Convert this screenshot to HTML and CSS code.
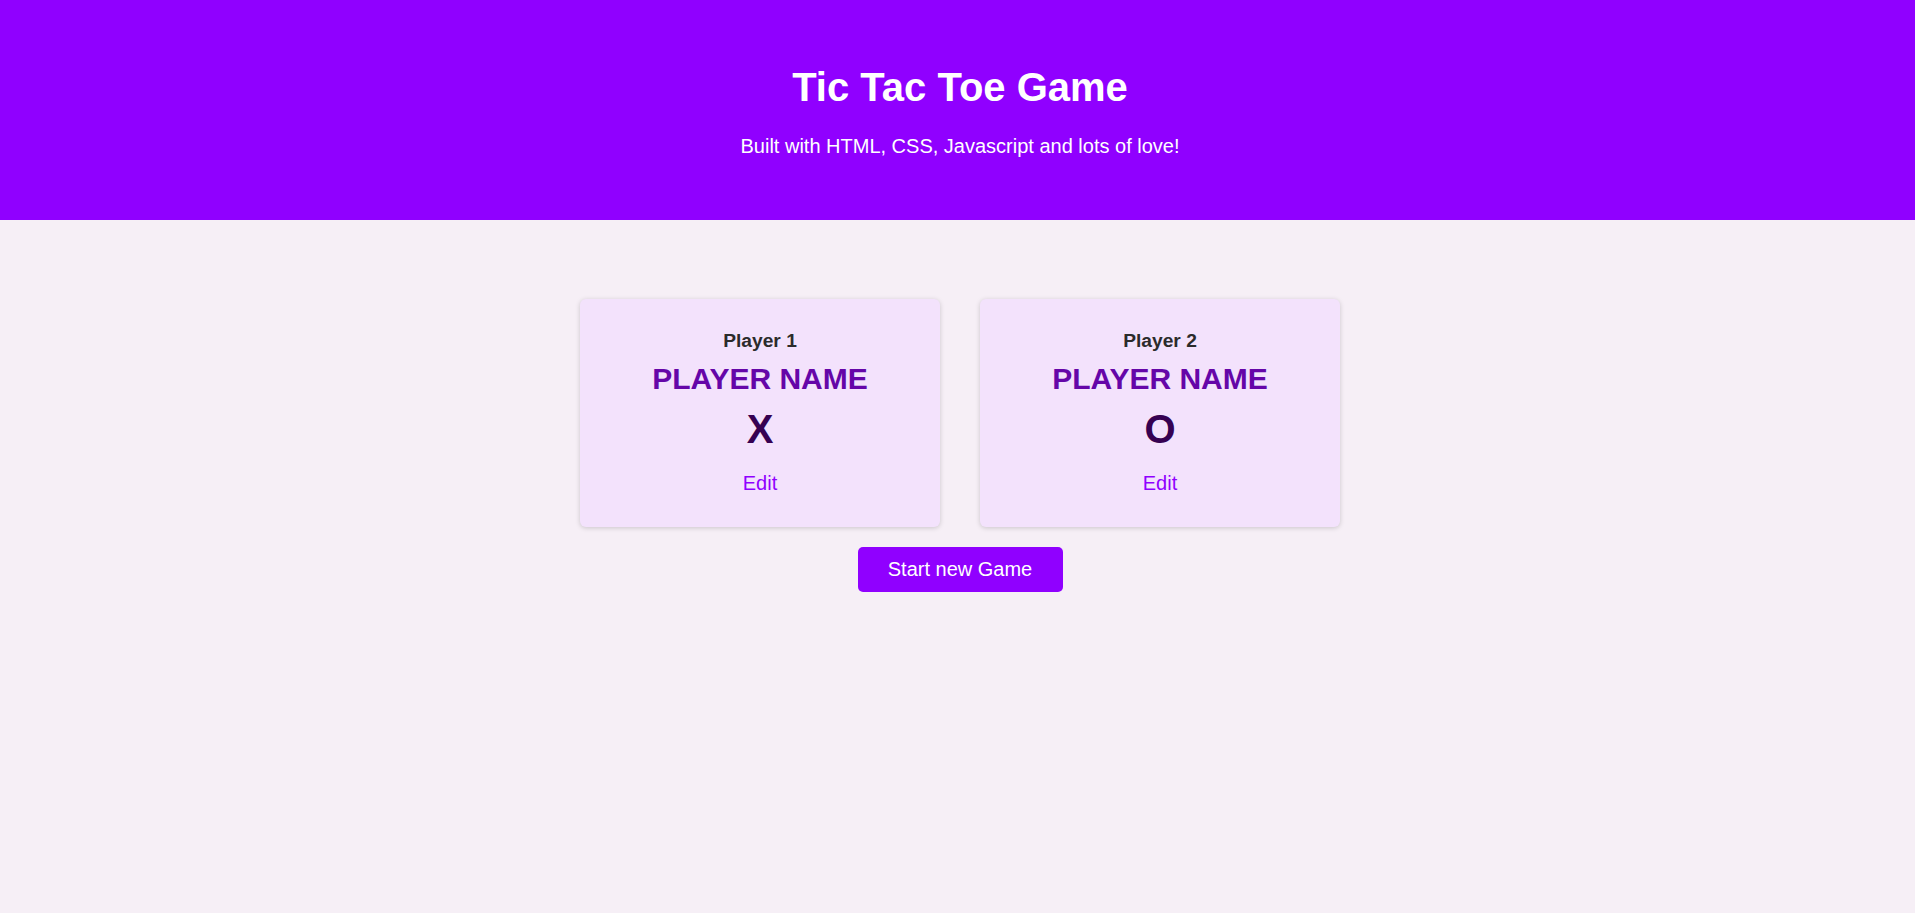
FILE: index.html
```html
<!DOCTYPE html>
<html lang="en">
<head>
<meta charset="utf-8">
<title>Tic Tac Toe</title>
<link rel="stylesheet" href="styles.css">
</head>
<body>
<header class="main-header">
  <h1 class="title">Tic Tac Toe Game</h1>
  <p class="subtitle">Built with HTML, CSS, Javascript and lots of love!</p>
</header>
<main class="content">
  <ol class="players">
    <li class="player-card">
      <h2 class="player-label">Player 1</h2>
      <h3 class="player-name">PLAYER NAME</h3>
      <p class="player-symbol">X</p>
      <button class="edit-btn">Edit</button>
    </li>
    <li class="player-card">
      <h2 class="player-label">Player 2</h2>
      <h3 class="player-name">PLAYER NAME</h3>
      <p class="player-symbol">O</p>
      <button class="edit-btn">Edit</button>
    </li>
  </ol>
  <button class="start-btn">Start new Game</button>
</main>
</body>
</html>
```

FILE: styles.css
```css
* { box-sizing: border-box; }

body {
  margin: 0;
  font-family: "Liberation Sans", Arial, sans-serif;
  background: #f6eff6;
  color: #2b2b2b;
  min-height: 100vh;
}

.main-header {
  background: #9000ff;
  color: #ffffff;
  text-align: center;
  padding: 64px 0 62px 5px;
}

.title {
  margin: 0 0 25px;
  font-size: 40px;
  font-weight: bold;
  line-height: 46px;
}

.subtitle {
  margin: 0;
  font-size: 20px;
  line-height: 23px;
}

.content {
  display: flex;
  flex-direction: column;
  align-items: center;
  padding: 79px 0 0 5px;
}

.players {
  list-style: none;
  margin: 0;
  padding: 0;
  display: flex;
  gap: 40px;
}

.player-card {
  width: 360px;
  height: 228px;
  background: #f3e2fc;
  border-radius: 6px;
  box-shadow: 0 1px 5px rgba(0, 0, 0, 0.18);
  display: flex;
  flex-direction: column;
  align-items: center;
  padding: 31px 0 0;
}

.player-label {
  margin: 0;
  font-size: 19.2px;
  line-height: 22px;
  font-weight: bold;
  color: #2b2b2b;
}

.player-name {
  margin: 10px 0 0;
  font-size: 30px;
  line-height: 34px;
  font-weight: bold;
  color: #6506a8;
}

.player-symbol {
  margin: 10px 0 0;
  font-size: 40px;
  line-height: 46px;
  font-weight: bold;
  color: #360152;
}

.edit-btn {
  margin-top: 20px;
  font: inherit;
  font-size: 20px;
  line-height: 23px;
  padding: 0;
  border: none;
  background: none;
  color: #9000ff;
  cursor: pointer;
}

.start-btn {
  margin-top: 20px;
  font: inherit;
  font-size: 20px;
  line-height: 23px;
  padding: 11px 30px;
  width: 205px;
  border: none;
  border-radius: 5px;
  background: #9000ff;
  color: #ffffff;
  cursor: pointer;
}
```
